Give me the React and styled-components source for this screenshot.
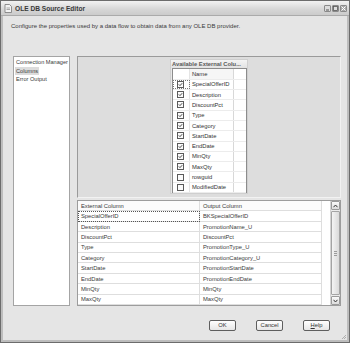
import React from 'react';
import styled, { createGlobalStyle } from 'styled-components';

const GlobalStyle = createGlobalStyle`
  body {
    margin: 0;
    background: #ffffff;
    font-family: "Liberation Sans", Arial, sans-serif;
  }
`;

const Window = styled.div`
  width: 350px;
  height: 343px;
  box-sizing: border-box;
  display: flex;
  flex-direction: column;
  background: #e5e5e5;
  border: 1px solid #6c6c6c;
  box-shadow: inset 0 0 0 2px #bdbdbd;
  overflow: hidden;
`;

const TitleBar = styled.div`
  height: 14px;
  display: flex;
  align-items: center;
  padding: 0 2px 0 3px;
  background: linear-gradient(#f2f2f2, #d6d6d6 60%, #cbcbcb);
  border-bottom: 1px solid #aaaaaa;
`;

const TitleText = styled.span`
  flex: 1;
  margin-left: 3px;
  font-size: 6.6px;
  font-weight: bold;
  color: #3a3a3a;
`;

const WinButtons = styled.div`
  display: flex;
  gap: 1px;
`;

const WinButton = styled.div`
  width: 7px;
  height: 7px;
  box-sizing: border-box;
  border: 1px solid #8a8a8a;
  border-radius: 1px;
  background: ${({ $close }) => ($close ? '#a9a9a9' : '#dcdcdc')};
  display: flex;
  align-items: center;
  justify-content: center;
`;

const Content = styled.div`
  flex: 1;
  display: flex;
  flex-direction: column;
  padding: 0 10px 0 12px;
`;

const Description = styled.div`
  height: 40px;
  box-sizing: border-box;
  padding-top: 6px;
  font-size: 6px;
  line-height: 8px;
  color: #3a3a3a;
  margin-left: -2px;
`;

const Main = styled.div`
  height: 250px;
  display: flex;
  gap: 7px;
`;

const Nav = styled.div`
  width: 57px;
  box-sizing: border-box;
  background: #fff;
  border: 1px solid #a4a4a4;
  padding: 1px 0 1px 1px;
  display: flex;
  flex-direction: column;
`;

const NavItem = styled.div`
  align-self: flex-start;
  font-size: 5.6px;
  line-height: 8.5px;
  color: #3a3a3a;
  padding: 0 1px;
  white-space: nowrap;
  background: ${({ $active }) => ($active ? '#dcdcdc' : 'transparent')};
`;

const RightPanel = styled.div`
  flex: 1;
  display: flex;
  flex-direction: column;
  gap: 2px;
`;

const Diagram = styled.div`
  height: 143px;
  box-sizing: border-box;
  background: #dddddd;
  border: 1px solid #9a9a9a;
  border-right-color: #f2f2f2;
  border-bottom-color: #f2f2f2;
  display: flex;
  justify-content: center;
  padding-top: 2px;
`;

const ColumnBox = styled.div`
  width: 78px;
  height: 135px;
  display: flex;
  flex-direction: column;
  background: #e8e8e8;
  border: 1px solid #cfcfcf;
  box-sizing: border-box;
`;

const BoxTitle = styled.div`
  height: 11px;
  display: flex;
  align-items: center;
  padding-left: 1px;
  font-size: 5.8px;
  font-weight: bold;
  color: #5a5a5a;
  white-space: nowrap;
  background: linear-gradient(#f4f4f4, #e2e2e2);
`;

const ColumnList = styled.div`
  flex: 1;
  margin: 0 0 0 1px;
  background: #fff;
  border: 1px solid #8c8c8c;
  border-bottom: none;
  display: flex;
  flex-direction: column;
`;

const ListRow = styled.div`
  height: 10.3px;
  display: flex;
  box-sizing: border-box;
  border-bottom: 1px solid #ececec;
`;

const CheckCell = styled.div`
  width: 17px;
  flex: none;
  display: flex;
  align-items: center;
  justify-content: center;
  border-right: 1px solid #e4e4e4;
  box-sizing: border-box;
  ${({ $focus }) => ($focus ? 'outline: 1px dotted #777; outline-offset: -1px;' : '')}
`;

const NameCell = styled.div`
  width: 44px;
  flex: none;
  display: flex;
  align-items: center;
  padding-left: 2px;
  box-sizing: border-box;
  font-size: 5.8px;
  color: #333;
  white-space: nowrap;
  overflow: hidden;
  border-right: 1px solid #d8d8d8;
  background: ${({ $head }) => ($head ? '#f6f6f6' : '#fff')};
`;

const Check = styled.div`
  width: 7px;
  height: 7px;
  box-sizing: border-box;
  border: 1px solid #5a5a5a;
  background: #fafafa;
  display: flex;
  align-items: center;
  justify-content: center;
`;

const Grid = styled.div`
  flex: 1;
  box-sizing: border-box;
  background: #fff;
  border: 1px solid #9c9c9c;
  display: flex;
`;

const GridBody = styled.div`
  flex: 1;
  display: flex;
  flex-direction: column;
`;

const GridRow = styled.div`
  height: 10.4px;
  display: flex;
  box-sizing: border-box;
`;

const GridCell = styled.div`
  width: 122px;
  flex: none;
  box-sizing: border-box;
  display: flex;
  align-items: center;
  padding-left: 3px;
  font-size: 5.8px;
  color: #3a3a3a;
  white-space: nowrap;
  border-right: 1px solid #dedede;
  border-bottom: 1px solid #dedede;
  background: ${({ $head }) => ($head ? '#fbfbfb' : '#fff')};
  ${({ $focus }) => ($focus ? 'outline: 1px dotted #555; outline-offset: -1px;' : '')}
`;

const Scrollbar = styled.div`
  width: 9px;
  margin-left: 8px;
  display: flex;
  flex-direction: column;
  background: #ececec;
  border-left: 1px solid #d4d4d4;
`;

const ScrollArrow = styled.div`
  height: 9px;
  box-sizing: border-box;
  border: 1px solid #9a9a9a;
  border-radius: 1px;
  background: linear-gradient(#fafafa, #dcdcdc);
  display: flex;
  align-items: center;
  justify-content: center;
`;

const ScrollThumb = styled.div`
  flex: 1;
  margin: 1px 0;
  box-sizing: border-box;
  border: 1px solid #a4a4a4;
  border-radius: 1px;
  background: linear-gradient(90deg, #f4f4f4, #dadada);
  display: flex;
  flex-direction: column;
  align-items: center;
  justify-content: center;
  gap: 1px;
`;

const Grip = styled.div`
  width: 3px;
  height: 1px;
  background: #9c9c9c;
`;

const Footer = styled.div`
  flex: 1;
  display: flex;
  justify-content: flex-end;
  align-items: flex-start;
  gap: 20px;
  padding: 14px 9px 0 0;
  position: relative;
`;

const Button = styled.button`
  width: 27px;
  height: 11px;
  padding: 0;
  box-sizing: border-box;
  border: 1px solid #5e5e5e;
  border-radius: 2px;
  background: linear-gradient(#ffffff, #e6e6e6);
  font-family: "Liberation Sans", Arial, sans-serif;
  font-size: 5.8px;
  color: #333;
  line-height: 9px;
`;

const ResizeGrip = styled.svg`
  position: absolute;
  right: -8px;
  bottom: 2px;
`;

const available = [
  ['SpecialOfferID', true],
  ['Description', true],
  ['DiscountPct', true],
  ['Type', true],
  ['Category', true],
  ['StartDate', true],
  ['EndDate', true],
  ['MinQty', true],
  ['MaxQty', true],
  ['rowguid', false],
  ['ModifiedDate', false],
];

const mappings = [
  ['SpecialOfferID', 'BKSpecialOfferID'],
  ['Description', 'PromotionName_U'],
  ['DiscountPct', 'DiscountPct'],
  ['Type', 'PromotionType_U'],
  ['Category', 'PromotionCategory_U'],
  ['StartDate', 'PromotionStartDate'],
  ['EndDate', 'PromotionEndDate'],
  ['MinQty', 'MinQty'],
  ['MaxQty', 'MaxQty'],
];

const CheckMark = () => (
  <svg width="5" height="5" viewBox="0 0 5 5">
    <path d="M0.8 2.4 L2 3.6 L4.2 1.2" fill="none" stroke="#333" strokeWidth="0.9" />
  </svg>
);

const App = () => (
  <>
    <GlobalStyle />
    <Window>
      <TitleBar>
        <svg width="8" height="9" viewBox="0 0 8 9">
          <path d="M1 0.5 H5.5 L7.5 2.5 V8.5 H1 Z" fill="#f2f2f2" stroke="#777" strokeWidth="0.8" />
          <path d="M2.5 4 H6 M2.5 5.5 H6" stroke="#888" strokeWidth="0.7" />
        </svg>
        <TitleText>OLE DB Source Editor</TitleText>
        <WinButtons>
          <WinButton>
            <svg width="5" height="5"><path d="M1 4 H4" stroke="#555" /></svg>
          </WinButton>
          <WinButton>
            <svg width="5" height="5"><rect x="0.5" y="0.5" width="4" height="4" fill="none" stroke="#555" strokeWidth="0.8" /></svg>
          </WinButton>
          <WinButton $close>
            <svg width="5" height="5"><path d="M0.5 0.5 L4.5 4.5 M4.5 0.5 L0.5 4.5" stroke="#fff" strokeWidth="1" /></svg>
          </WinButton>
        </WinButtons>
      </TitleBar>
      <Content>
        <Description>
          Configure the properties used by a data flow to obtain data from any OLE DB provider.
        </Description>
        <Main>
          <Nav>
            <NavItem>Connection Manager</NavItem>
            <NavItem $active>Columns</NavItem>
            <NavItem>Error Output</NavItem>
          </Nav>
          <RightPanel>
            <Diagram>
              <ColumnBox>
                <BoxTitle>Available External Colu...</BoxTitle>
                <ColumnList>
                  <ListRow>
                    <CheckCell />
                    <NameCell $head>Name</NameCell>
                  </ListRow>
                  {available.map(([name, checked], i) => (
                    <ListRow key={name}>
                      <CheckCell $focus={i === 0}>
                        <Check>{checked && <CheckMark />}</Check>
                      </CheckCell>
                      <NameCell>{name}</NameCell>
                    </ListRow>
                  ))}
                </ColumnList>
              </ColumnBox>
            </Diagram>
            <Grid>
              <GridBody>
                <GridRow>
                  <GridCell $head>External Column</GridCell>
                  <GridCell $head>Output Column</GridCell>
                </GridRow>
                {mappings.map(([ext, out], i) => (
                  <GridRow key={ext}>
                    <GridCell $focus={i === 0}>{ext}</GridCell>
                    <GridCell>{out}</GridCell>
                  </GridRow>
                ))}
              </GridBody>
              <Scrollbar>
                <ScrollArrow>
                  <svg width="5" height="4"><path d="M0.5 3.2 L2.5 1 L4.5 3.2" fill="none" stroke="#333" strokeWidth="1" /></svg>
                </ScrollArrow>
                <ScrollThumb>
                  <Grip />
                  <Grip />
                  <Grip />
                </ScrollThumb>
                <ScrollArrow>
                  <svg width="5" height="4"><path d="M0.5 0.8 L2.5 3 L4.5 0.8" fill="none" stroke="#333" strokeWidth="1" /></svg>
                </ScrollArrow>
              </Scrollbar>
            </Grid>
          </RightPanel>
        </Main>
        <Footer>
          <Button>OK</Button>
          <Button>Cancel</Button>
          <Button><u>H</u>elp</Button>
          <ResizeGrip width="6" height="6" viewBox="0 0 6 6">
            <path d="M5 1 L1 5 M5 3 L3 5" stroke="#a0a0a0" strokeWidth="0.8" />
          </ResizeGrip>
        </Footer>
      </Content>
    </Window>
  </>
);

export default App;
